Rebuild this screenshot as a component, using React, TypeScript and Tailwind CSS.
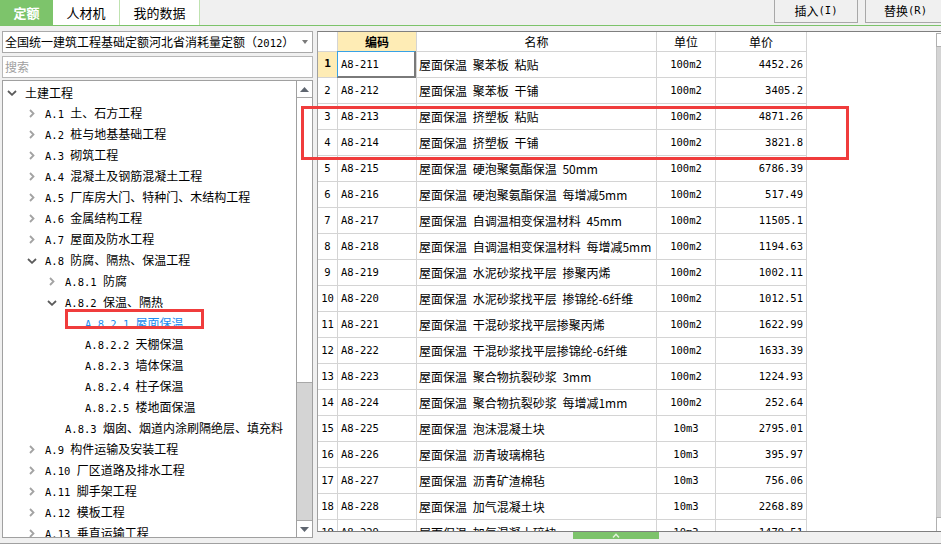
import React from 'react';

const mono = "font-['DejaVu_Sans_Mono','Noto_Sans_CJK_SC',monospace]";

type TreeNode = { lv: number; ch?: 'down' | 'right'; code?: string; name: string; active?: boolean };

const tree: TreeNode[] = [
  { lv: 0, ch: 'down', name: '土建工程' },
  { lv: 1, ch: 'right', code: 'A.1', name: '土、石方工程' },
  { lv: 1, ch: 'right', code: 'A.2', name: '桩与地基基础工程' },
  { lv: 1, ch: 'right', code: 'A.3', name: '砌筑工程' },
  { lv: 1, ch: 'right', code: 'A.4', name: '混凝土及钢筋混凝土工程' },
  { lv: 1, ch: 'right', code: 'A.5', name: '厂库房大门、特种门、木结构工程' },
  { lv: 1, ch: 'right', code: 'A.6', name: '金属结构工程' },
  { lv: 1, ch: 'right', code: 'A.7', name: '屋面及防水工程' },
  { lv: 1, ch: 'down', code: 'A.8', name: '防腐、隔热、保温工程' },
  { lv: 2, ch: 'right', code: 'A.8.1', name: '防腐' },
  { lv: 2, ch: 'down', code: 'A.8.2', name: '保温、隔热' },
  { lv: 3, code: 'A.8.2.1', name: '屋面保温', active: true },
  { lv: 3, code: 'A.8.2.2', name: '天棚保温' },
  { lv: 3, code: 'A.8.2.3', name: '墙体保温' },
  { lv: 3, code: 'A.8.2.4', name: '柱子保温' },
  { lv: 3, code: 'A.8.2.5', name: '楼地面保温' },
  { lv: 2, code: 'A.8.3', name: '烟囱、烟道内涂刷隔绝层、填充料' },
  { lv: 1, ch: 'right', code: 'A.9', name: '构件运输及安装工程' },
  { lv: 1, ch: 'right', code: 'A.10', name: '厂区道路及排水工程' },
  { lv: 1, ch: 'right', code: 'A.11', name: '脚手架工程' },
  { lv: 1, ch: 'right', code: 'A.12', name: '模板工程' },
  { lv: 1, ch: 'right', code: 'A.13', name: '垂直运输工程' },
];

const indent = ['pl-0', 'pl-[20px]', 'pl-[40px]', 'pl-[60px]'];

const rows: [string, string, string, string][] = [
  ['A8-211', '屋面保温 聚苯板 粘贴', '100m2', '4452.26'],
  ['A8-212', '屋面保温 聚苯板 干铺', '100m2', '3405.2'],
  ['A8-213', '屋面保温 挤塑板 粘贴', '100m2', '4871.26'],
  ['A8-214', '屋面保温 挤塑板 干铺', '100m2', '3821.8'],
  ['A8-215', '屋面保温 硬泡聚氨酯保温 50mm', '100m2', '6786.39'],
  ['A8-216', '屋面保温 硬泡聚氨酯保温 每增减5mm', '100m2', '517.49'],
  ['A8-217', '屋面保温 自调温相变保温材料 45mm', '100m2', '11505.1'],
  ['A8-218', '屋面保温 自调温相变保温材料 每增减5mm', '100m2', '1194.63'],
  ['A8-219', '屋面保温 水泥砂浆找平层 掺聚丙烯', '100m2', '1002.11'],
  ['A8-220', '屋面保温 水泥砂浆找平层 掺锦纶-6纤维', '100m2', '1012.51'],
  ['A8-221', '屋面保温 干混砂浆找平层掺聚丙烯', '100m2', '1622.99'],
  ['A8-222', '屋面保温 干混砂浆找平层掺锦纶-6纤维', '100m2', '1633.39'],
  ['A8-223', '屋面保温 聚合物抗裂砂浆 3mm', '100m2', '1224.93'],
  ['A8-224', '屋面保温 聚合物抗裂砂浆 每增减1mm', '100m2', '252.64'],
  ['A8-225', '屋面保温 泡沫混凝土块', '10m3', '2795.01'],
  ['A8-226', '屋面保温 沥青玻璃棉毡', '10m3', '395.97'],
  ['A8-227', '屋面保温 沥青矿渣棉毡', '10m3', '756.06'],
  ['A8-228', '屋面保温 加气混凝土块', '10m3', '2268.89'],
  ['A8-229', '屋面保温 加气混凝土碎块', '10m3', '1479.51'],
];

const ChevronRight = () => (
  <svg width="6" height="9" viewBox="0 0 6 9">
    <polyline points="1,1 4.5,4.5 1,8" fill="none" stroke="#a3a3a3" strokeWidth="1.8" />
  </svg>
);

const ChevronDown = () => (
  <svg width="10" height="6" viewBox="0 0 10 6">
    <polyline points="1,1 5,4.8 9,1" fill="none" stroke="#5a5a5a" strokeWidth="1.8" />
  </svg>
);

export default function App() {
  return (
    <div className="relative w-[941px] h-[558px] overflow-hidden bg-white text-[12px] text-black font-['Noto_Sans_CJK_SC',sans-serif]">
      <div className="h-[544px] flex flex-col bg-[#f0f0f0] border-b border-[#a0a0a0]">
        {/* top tabs / buttons */}
        <div className="h-[26px] shrink-0 flex border-b border-[#7cc36a] overflow-hidden">
          <div className="w-[53px] shrink-0 bg-[#7dc46b] text-white font-bold text-[13px] flex items-center justify-center">
            定额
          </div>
          <div className="w-[67px] shrink-0 bg-white border-r border-[#bfe3b0] text-[13px] flex items-center justify-center">
            人材机
          </div>
          <div className="w-[80px] shrink-0 bg-white border-r border-[#bfe3b0] text-[13px] flex items-center justify-center">
            我的数据
          </div>
          <div className="flex-1" />
          <div className="w-[84px] h-[23px] shrink-0 border-x border-b border-[#a8a8a8] flex items-center justify-center">
            插入<span className={`${mono} text-[10.5px]`}>(I)</span>
          </div>
          <div className="w-[76px] h-[23px] shrink-0 ml-[7px] border-l border-b border-[#a8a8a8] flex items-center justify-center pl-[4px]">
            替换<span className={`${mono} text-[10.5px]`}>(R)</span>
          </div>
        </div>

        <div className="flex-1 flex pt-[5px]">
          {/* left panel */}
          <div className="ml-[2px] w-[311px] shrink-0 flex flex-col">
            <div className="h-[22px] bg-white border border-[#a9a9a9] flex items-center pl-[2px] pr-[4px]">
              <span className="flex-1 whitespace-nowrap overflow-hidden">
                全国统一建筑工程基础定额河北省消耗量定额（<span className={`${mono} text-[10.5px]`}>2012</span>）
              </span>
              <svg width="6" height="4" viewBox="0 0 6 4">
                <polygon points="0,0 6,0 3,4" fill="#7a7a7a" />
              </svg>
            </div>
            <div className="h-[22px] mt-[3px] bg-white border border-[#b8b8b8] flex items-center pl-[2px] text-[#a0a0a0]">
              搜索
            </div>
            <div className="h-[458px] mt-[2px] bg-white border border-[#a0a0a0] flex overflow-hidden">
              <div className="flex-1 min-w-0 pt-[1px] overflow-hidden">
                {tree.map((n, i) => (
                  <div key={i} className={`h-[21px] flex items-center whitespace-nowrap ${indent[n.lv]}`}>
                    <div className={`w-[22px] shrink-0 flex items-center ${n.ch === 'down' ? 'pl-[4px]' : 'pl-[6px]'}`}>
                      {n.ch === 'down' && <ChevronDown />}
                      {n.ch === 'right' && <ChevronRight />}
                    </div>
                    <span className={n.active ? 'text-[#1a8cf0]' : 'text-black'}>
                      {n.code && <span className={`${mono} text-[10.5px]`}>{n.code}&nbsp;</span>}
                      {n.name}
                    </span>
                  </div>
                ))}
              </div>
              {/* tree scrollbar */}
              <div className="w-[16px] shrink-0 flex flex-col border-l border-[#a0a0a0] bg-[#d4d4d4]">
                <div className="h-[17px] bg-white border-b border-[#a8a8a8] flex items-center justify-center">
                  <svg width="9" height="5" viewBox="0 0 9 5">
                    <polygon points="0,5 9,5 4.5,0" fill="#5f6670" />
                  </svg>
                </div>
                <div className="h-[285px] bg-white border-b border-[#a8a8a8]" />
                <div className="flex-1" />
                <div className="h-[17px] bg-white border-t border-[#a8a8a8] flex items-center justify-center">
                  <svg width="9" height="5" viewBox="0 0 9 5">
                    <polygon points="0,0 9,0 4.5,5" fill="#5f6670" />
                  </svg>
                </div>
              </div>
            </div>
          </div>

          <div className="w-[4px] shrink-0" />

          {/* right panel */}
          <div className="flex-1 min-w-0 flex flex-col">
            <div className="h-[501px] shrink-0 bg-white border-t border-b border-l border-t-[#7f7f7f] border-b-[#7f7f7f] border-l-[#a0a0a0] flex overflow-hidden">
              <div className="flex-1 min-w-0 overflow-hidden">
                <div className="flex h-[20px] w-[489px] border-b border-[#d4d4d4]">
                  <div className="w-[20px] border-r border-[#d4d4d4]" />
                  <div className="w-[79px] border-r border-[#d4d4d4] bg-[#feecb5] font-bold flex items-center justify-center">
                    编码
                  </div>
                  <div className="w-[240px] border-r border-[#d4d4d4] flex items-center justify-center">名称</div>
                  <div className="w-[59px] border-r border-[#d4d4d4] flex items-center justify-center">单位</div>
                  <div className="w-[91px] border-r border-[#d4d4d4] flex items-center justify-center">单价</div>
                </div>
                {rows.map(([code, name, unit, price], i) => (
                  <div key={code} className="flex h-[26px] w-[489px] border-b border-[#d4d4d4]">
                    <div
                      className={`w-[20px] border-r border-[#d4d4d4] flex items-center justify-center ${mono} ${
                        i === 0 ? 'bg-[#feecb5] font-bold text-[11px]' : 'text-[10.5px]'
                      }`}
                    >
                      {i + 1}
                    </div>
                    <div className={`relative w-[79px] border-r border-[#d4d4d4] flex items-center pl-[3px] ${mono} text-[10.5px]`}>
                      {code}
                      {i === 0 && (
                        <div className="absolute left-[-1px] top-[-1px] right-0 bottom-[-1px] border-t border-l border-[#38a2e6] border-r-2 border-b-2 border-r-[#7a7a7a] border-b-[#7a7a7a]" />
                      )}
                    </div>
                    <div className="w-[240px] border-r border-[#d4d4d4] flex items-center pl-[2px] whitespace-nowrap overflow-hidden [word-spacing:3px]">
                      {name}
                    </div>
                    <div className={`w-[59px] border-r border-[#d4d4d4] flex items-center justify-center ${mono} text-[10.5px]`}>
                      {unit}
                    </div>
                    <div className={`w-[91px] border-r border-[#d4d4d4] flex items-center justify-end pr-[3px] ${mono} text-[10.5px]`}>
                      {price}
                    </div>
                  </div>
                ))}
              </div>
              {/* table scrollbar (cut off at window edge) */}
              <div className="w-[5px] shrink-0 flex flex-col pt-[1px]">
                <div className="h-[14px] bg-white border-l border-t border-b border-[#b0b0b0]" />
                <div className="flex-1 bg-[#d4d4d4] border-l border-[#c4c4c4]" />
                <div className="h-[14px] bg-white border-l border-t border-[#b0b0b0]" />
              </div>
            </div>
            <div className="h-[11px] pl-[256px]">
              <div className="w-[86px] h-[7px] bg-[#7dc36b] flex items-center justify-center">
                <svg width="8" height="5" viewBox="0 0 8 5">
                  <polyline points="1,4.5 4,1.2 7,4.5" fill="none" stroke="#e4f3dc" strokeWidth="1.4" />
                </svg>
              </div>
            </div>
          </div>
        </div>
      </div>

      {/* red annotation boxes */}
      <div className="absolute left-[65px] top-[309px] w-[139px] h-[20px] border-[3px] border-[#f03c3c]" />
      <div className="absolute left-[301px] top-[106px] w-[548px] h-[54px] border-[3px] border-[#f03c3c]" />
    </div>
  );
}
